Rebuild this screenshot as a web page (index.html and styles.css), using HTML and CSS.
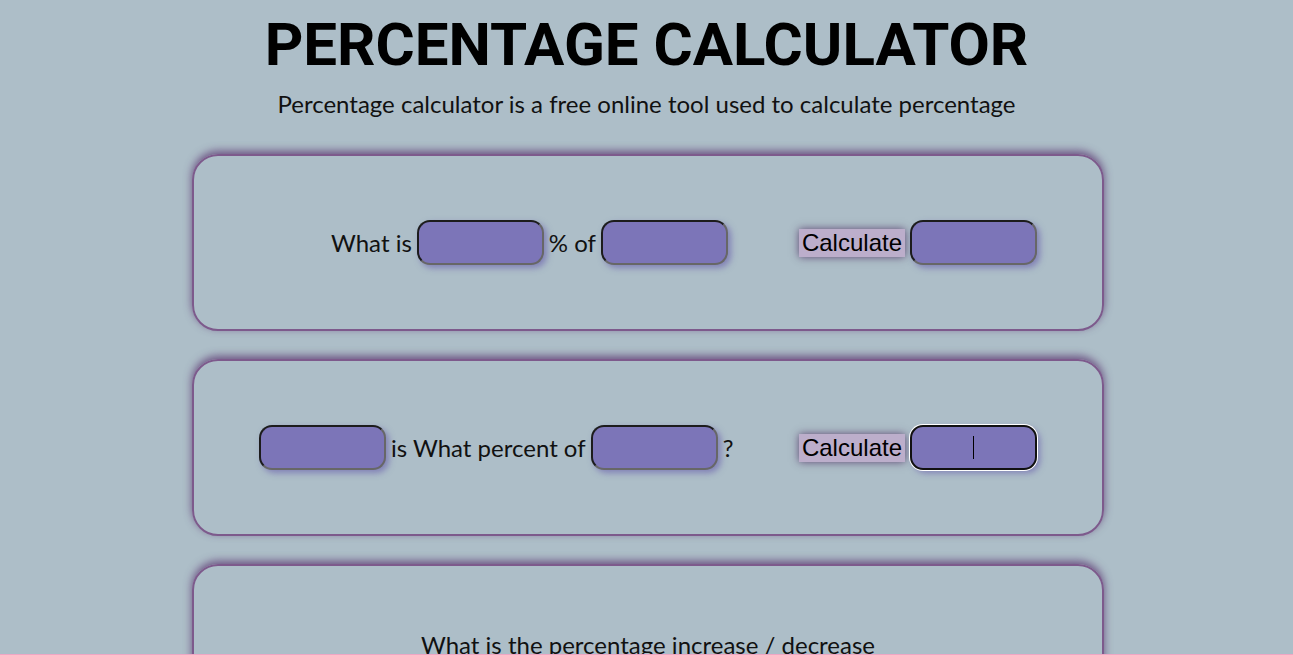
FILE: index.html
```html
<!DOCTYPE html>
<html lang="en">
<head>
<meta charset="utf-8">
<title>Percentage Calculator</title>
<link rel="stylesheet" href="styles.css">
</head>
<body>
<header class="head">
  <h1 class="title">PERCENTAGE CALCULATOR</h1>
  <p class="subtitle">Percentage calculator is a free online tool used to calculate percentage</p>
</header>
<main class="cards">
  <section class="card">
    <div class="row">
      <div class="question q1">
        <span class="label">What is</span>
        <input class="field" type="text">
        <span class="label">% of</span>
        <input class="field" type="text">
      </div>
      <div class="action">
        <button class="calc" type="button">Calculate</button>
        <input class="field" type="text">
      </div>
    </div>
  </section>
  <section class="card">
    <div class="row">
      <div class="question q2">
        <input class="field" type="text">
        <span class="label">is What percent of</span>
        <input class="field" type="text">
        <span class="label">?</span>
      </div>
      <div class="action">
        <button class="calc" type="button">Calculate</button>
        <span class="field-wrap">
          <input class="field focused" type="text">
          <span class="caret"></span>
        </span>
      </div>
    </div>
  </section>
  <section class="card card-tall">
    <p class="card-heading">What is the percentage increase / decrease</p>
  </section>
</main>
<div class="edge"></div>
</body>
</html>
```
FILE: styles.css
```css
html, body {
  margin: 0;
  padding: 0;
}
body {
  background: #adbec8;
  color: #111;
  font-family: Lato, "Noto Sans", sans-serif;
  padding-top: 8px;
}
.head {
  text-align: center;
}
.title {
  margin: 0;
  font-family: Roboto, "Liberation Sans", sans-serif;
  font-weight: 700;
  font-size: 60px;
  line-height: 74px;
  color: #000;
}
.subtitle {
  margin: 7px 0 0;
  font-size: 24px;
  line-height: 30px;
}
.cards {
  display: flex;
  flex-direction: column;
  align-items: center;
  gap: 28px;
  margin-top: 35px;
}
.card {
  box-sizing: border-box;
  width: 912px;
  height: 177px;
  margin-left: 3px;
  border: 2px solid #7d5a8c;
  border-radius: 26px;
  box-shadow: 0 -3px 8px rgba(95, 62, 118, 0.85);
  display: flex;
  align-items: center;
}
.card-tall {
  height: 240px;
  align-items: flex-start;
  justify-content: center;
}
.card-heading {
  margin: 64px 0 0;
  font-size: 24px;
  line-height: 30px;
}
.row {
  display: flex;
  align-items: center;
  width: 100%;
  padding-right: 65px;
}
.question {
  display: flex;
  align-items: center;
  gap: 5px;
}
.q1 { padding-left: 137px; }
.q2 { padding-left: 65px; }
.label {
  font-size: 24px;
  line-height: 30px;
  white-space: nowrap;
}
.action {
  display: flex;
  align-items: center;
  gap: 5px;
  margin-left: auto;
}
.field {
  box-sizing: border-box;
  width: 127px;
  height: 45px;
  margin: 0;
  padding: 0;
  background: #7c75b8;
  border: 2px solid #2a2a2a;
  border-top-color: #1c1c1c;
  border-left-color: #1c1c1c;
  border-right-color: #676767;
  border-bottom-color: #676767;
  border-radius: 13px;
  box-shadow: 3px 3px 6px rgba(92, 78, 168, 0.55);
  outline: none;
  text-align: center;
}
.field-wrap {
  position: relative;
  display: inline-flex;
}
.field.focused {
  border: 2px solid #111;
  box-shadow: 0 0 0 1px #fff, 3px 3px 6px rgba(92, 78, 168, 0.55);
}
.caret {
  position: absolute;
  left: 63px;
  top: 11px;
  width: 1px;
  height: 23px;
  background: #000;
}
.calc {
  margin: 0;
  padding: 0 3px;
  border: 0;
  background: #bcaecb;
  color: #000;
  font-family: "Liberation Sans", Arial, sans-serif;
  font-size: 24px;
  line-height: 28px;
  box-shadow: 0 0 8px rgba(80, 50, 100, 0.85);
  cursor: pointer;
}
.edge {
  position: fixed;
  left: 0;
  right: 0;
  bottom: 0;
  height: 1px;
  background: #f0a6c4;
}
```
